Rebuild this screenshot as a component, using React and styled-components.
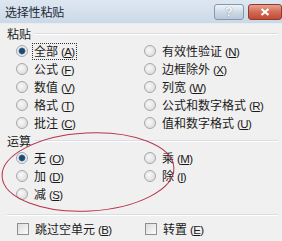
import React from 'react';
import styled, { createGlobalStyle } from 'styled-components';

const GlobalStyle = createGlobalStyle`
  html, body { margin: 0; padding: 0; background: #f0f0f0; }
  body { font-family: "Noto Sans CJK SC", "Liberation Sans", sans-serif; }
`;

const Dialog = styled.div`
  position: relative;
  width: 282px;
  height: 241px;
  background: #f0f0f0;
  overflow: hidden;
  color: #1a1a1a;
`;

const TitleBar = styled.div`
  display: flex;
  align-items: center;
  height: 24px;
  padding-left: 5px;
  background: linear-gradient(#dde7f1, #cbd9e7);
  border-bottom: 1px solid #e6ecf2;
  box-sizing: border-box;
`;

const Title = styled.div`
  flex: 1;
  font-size: 12px;
  letter-spacing: -0.2px;
  color: #1e2a36;
  margin-top: -1px;
`;

const TitleButton = styled.div`
  display: flex;
  align-items: center;
  justify-content: center;
  width: ${p => p.$w}px;
  height: 14px;
  margin-right: ${p => p.$mr}px;
  border: 1px solid ${p => (p.$close ? '#8c3b2e' : '#8797ab')};
  border-radius: 3px;
  background: ${p =>
    p.$close
      ? 'linear-gradient(#e9a294, #d26a55 50%, #c24a33)'
      : 'linear-gradient(#eef3f8, #cfdae6 50%, #b9c8d9)'};
  color: #fff;
  font-family: "Liberation Sans", sans-serif;
  font-weight: bold;
  font-size: 12px;
  text-shadow: 0 0 1px #4a5a6c;
`;

const Body = styled.div`
  padding: 1px 4px 0 7px;
  font-size: 12px;
`;

const GroupHeader = styled.div`
  display: flex;
  align-items: center;
  height: 17px;
  gap: 3px;
`;

const GroupLabel = styled.span`
  font-size: 12px;
  line-height: 16px;
`;

const Rule = styled.div`
  flex: 1;
  height: 1px;
  background: #d7dde3;
  border-bottom: 1px solid #ffffff;
`;

const OptionGrid = styled.div`
  display: grid;
  grid-template-columns: 128px 1fr;
  grid-auto-rows: 18px;
  padding-left: 9px;
`;

const Option = styled.label`
  display: flex;
  align-items: center;
  gap: 5px;
  grid-column: ${p => p.$col};
  grid-row: ${p => p.$row};
  white-space: nowrap;
`;

const Radio = styled.span`
  width: 10px;
  height: 10px;
  border-radius: 50%;
  border: 1px solid #a3a8ad;
  background: ${p =>
    p.$checked
      ? 'radial-gradient(circle, #1f4a6e 0 2.4px, #5b86ab 3.2px, #e9edf1 3.8px)'
      : 'radial-gradient(circle at 40% 40%, #f8f8f8, #d6d6d6)'};
  flex-shrink: 0;
`;

const CheckBox = styled.span`
  width: 10px;
  height: 10px;
  border: 1px solid #8e8f8f;
  background: linear-gradient(135deg, #dcdcdc, #fbfbfb);
  flex-shrink: 0;
`;

const Text = styled.span`
  display: inline-block;
  line-height: 13px;
  padding: 0 1px;
  outline: ${p => (p.$focus ? '1px dotted #333' : 'none')};
  outline-offset: 0;
`;

const Key = styled.span`
  font-family: "Liberation Sans", sans-serif;
  font-size: 11.5px;
  margin-left: 3px;
  letter-spacing: -0.6px;
  u { text-decoration-thickness: 1px; text-underline-offset: 1px; }
`;

const Separator = styled.div`
  height: 1px;
  margin: 11px 0 5px 0;
  background: #d7dde3;
  border-bottom: 1px solid #ffffff;
`;

const Footer = styled.div`
  display: grid;
  grid-template-columns: 128px 1fr;
  padding-left: 10px;
  height: 16px;
`;

const Circle = styled.svg`
  position: absolute;
  left: 0;
  top: 128px;
  pointer-events: none;
`;

const Accel = ({ k }) => (
  <Key>(<u>{k}</u>)</Key>
);

const pasteOptions = [
  { label: '全部', key: 'A', col: 1, row: 1, checked: true, focus: true },
  { label: '公式', key: 'F', col: 1, row: 2 },
  { label: '数值', key: 'V', col: 1, row: 3 },
  { label: '格式', key: 'T', col: 1, row: 4 },
  { label: '批注', key: 'C', col: 1, row: 5 },
  { label: '有效性验证', key: 'N', col: 2, row: 1 },
  { label: '边框除外', key: 'X', col: 2, row: 2 },
  { label: '列宽', key: 'W', col: 2, row: 3 },
  { label: '公式和数字格式', key: 'R', col: 2, row: 4 },
  { label: '值和数字格式', key: 'U', col: 2, row: 5 },
];

const opOptions = [
  { label: '无', key: 'O', col: 1, row: 1, checked: true },
  { label: '加', key: 'D', col: 1, row: 2 },
  { label: '减', key: 'S', col: 1, row: 3 },
  { label: '乘', key: 'M', col: 2, row: 1 },
  { label: '除', key: 'I', col: 2, row: 2 },
];

function OptionList({ items }) {
  return (
    <OptionGrid>
      {items.map(o => (
        <Option key={o.label} $col={o.col} $row={o.row}>
          <Radio $checked={o.checked} />
          <Text $focus={o.focus}>
            {o.label}
            <Accel k={o.key} />
          </Text>
        </Option>
      ))}
    </OptionGrid>
  );
}

export default function App() {
  return (
    <>
      <GlobalStyle />
      <Dialog>
        <TitleBar>
          <Title>选择性粘贴</Title>
          <TitleButton $w={28} $mr={4}>?</TitleButton>
          <TitleButton $w={32} $mr={0} $close>
            <svg width="10" height="8" viewBox="0 0 10 8">
              <path d="M1.5 1 L8.5 7 M8.5 1 L1.5 7" stroke="#fff" strokeWidth="2.2" />
            </svg>
          </TitleButton>
        </TitleBar>
        <Body>
          <GroupHeader>
            <GroupLabel>粘贴</GroupLabel>
            <Rule />
          </GroupHeader>
          <OptionList items={pasteOptions} />
          <GroupHeader>
            <GroupLabel>运算</GroupLabel>
            <Rule />
          </GroupHeader>
          <OptionList items={opOptions} />
          <Separator />
          <Footer>
            <Option $col={1} $row={1}>
              <CheckBox />
              <Text>
                跳过空单元
                <Accel k="B" />
              </Text>
            </Option>
            <Option $col={2} $row={1}>
              <CheckBox />
              <Text>
                转置
                <Accel k="E" />
              </Text>
            </Option>
          </Footer>
        </Body>
        <Circle width="180" height="90" viewBox="0 0 180 90">
          <ellipse
            cx="88"
            cy="44"
            rx="86"
            ry="39"
            transform="rotate(-3 88 44)"
            fill="none"
            stroke="#b8324a"
            strokeWidth="1"
          />
        </Circle>
      </Dialog>
    </>
  );
}
